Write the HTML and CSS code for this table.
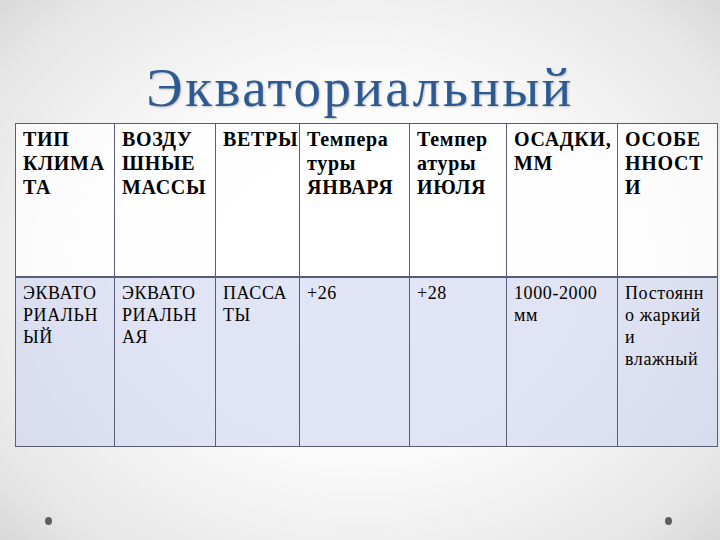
FILE: index.html
```html
<!DOCTYPE html>
<html lang="ru">
<head>
<meta charset="utf-8">
<link rel="stylesheet" href="styles.css">
</head>
<body>
<div class="slide">
  <p class="title">Экваториальный</p>
  <table class="climate">
    <colgroup>
      <col class="c1"><col class="c2"><col class="c3"><col class="c4"><col class="c5"><col class="c6"><col class="c7">
    </colgroup>
    <tr class="head">
      <td class="cell">ТИП<br>КЛИМА<br>ТА</td>
      <td class="cell">ВОЗДУ<br>ШНЫЕ<br>МАССЫ</td>
      <td class="cell">ВЕТРЫ</td>
      <td class="cell">Темпера<br>туры<br>ЯНВАРЯ</td>
      <td class="cell">Темпер<br>атуры<br>ИЮЛЯ</td>
      <td class="cell">ОСАДКИ,<br>ММ</td>
      <td class="cell">ОСОБЕ<br>ННОСТ<br>И</td>
    </tr>
    <tr class="body">
      <td class="cell">ЭКВАТО<br>РИАЛЬН<br>ЫЙ</td>
      <td class="cell">ЭКВАТО<br>РИАЛЬН<br>АЯ</td>
      <td class="cell">ПАССА<br>ТЫ</td>
      <td class="cell">+26</td>
      <td class="cell">+28</td>
      <td class="cell">1000-2000<br>мм</td>
      <td class="cell">Постоянн<br>о жаркий<br>и<br>влажный</td>
    </tr>
  </table>
  <div class="dots"><span class="dot"></span><span class="dot"></span></div>
</div>
</body>
</html>
```
FILE: styles.css
```css
html, body { margin: 0; padding: 0; }
body { width: 720px; height: 540px; overflow: hidden; font-family: "Liberation Serif", "Tinos", "Times New Roman", serif; }
.slide { width: 720px; height: 540px; display: flex; flex-direction: column; background: radial-gradient(ellipse 70% 75% at 50% 50%, #ffffff 0%, #fbfbfb 45%, #e6e6e6 85%, #d6d6d6 100%); }
.title { font-family: "Liberation Serif", "Tinos", "Times New Roman", serif; margin: 58px 0 5px; height: 60px; line-height: 60px; font-size: 55px; font-weight: normal; text-align: center; color: #2e5a92; letter-spacing: 2.5px; text-shadow: 1px 1px 2px rgba(0, 0, 0, 0.22); position: relative; z-index: 1; }
.climate { margin-left: 15px; width: 702px; table-layout: fixed; border-collapse: collapse; border: 1.5px solid #5a5c7c; color: #000; }
.c1 { width: 99px; }
.c2 { width: 101px; }
.c3 { width: 84px; }
.c4 { width: 110px; }
.c5 { width: 97px; }
.c6 { width: 111px; }
.c7 { width: 100px; }
.cell { font-family: "Liberation Serif", "Tinos", "Times New Roman", serif; border-left: 1.5px solid #5a5c7c; border-right: 1.5px solid #5a5c7c; vertical-align: top; padding: 3px 0 0 7px; white-space: nowrap; overflow: hidden; }
.head .cell { height: 149px; font-size: 20px; line-height: 24px; font-weight: bold; letter-spacing: 0.7px; background: rgba(255, 255, 255, 0.75); border-bottom: 2px solid #5a5c7c; }
.body .cell { height: 164px; font-size: 18px; line-height: 22px; letter-spacing: 0.6px; background: rgba(206, 212, 238, 0.6); padding-top: 4px; }
.dots { display: flex; justify-content: space-between; padding: 70px 48px 0 45px; }
.dot { width: 7px; height: 8px; border-radius: 50%; background: #5e5e5e; }
```
